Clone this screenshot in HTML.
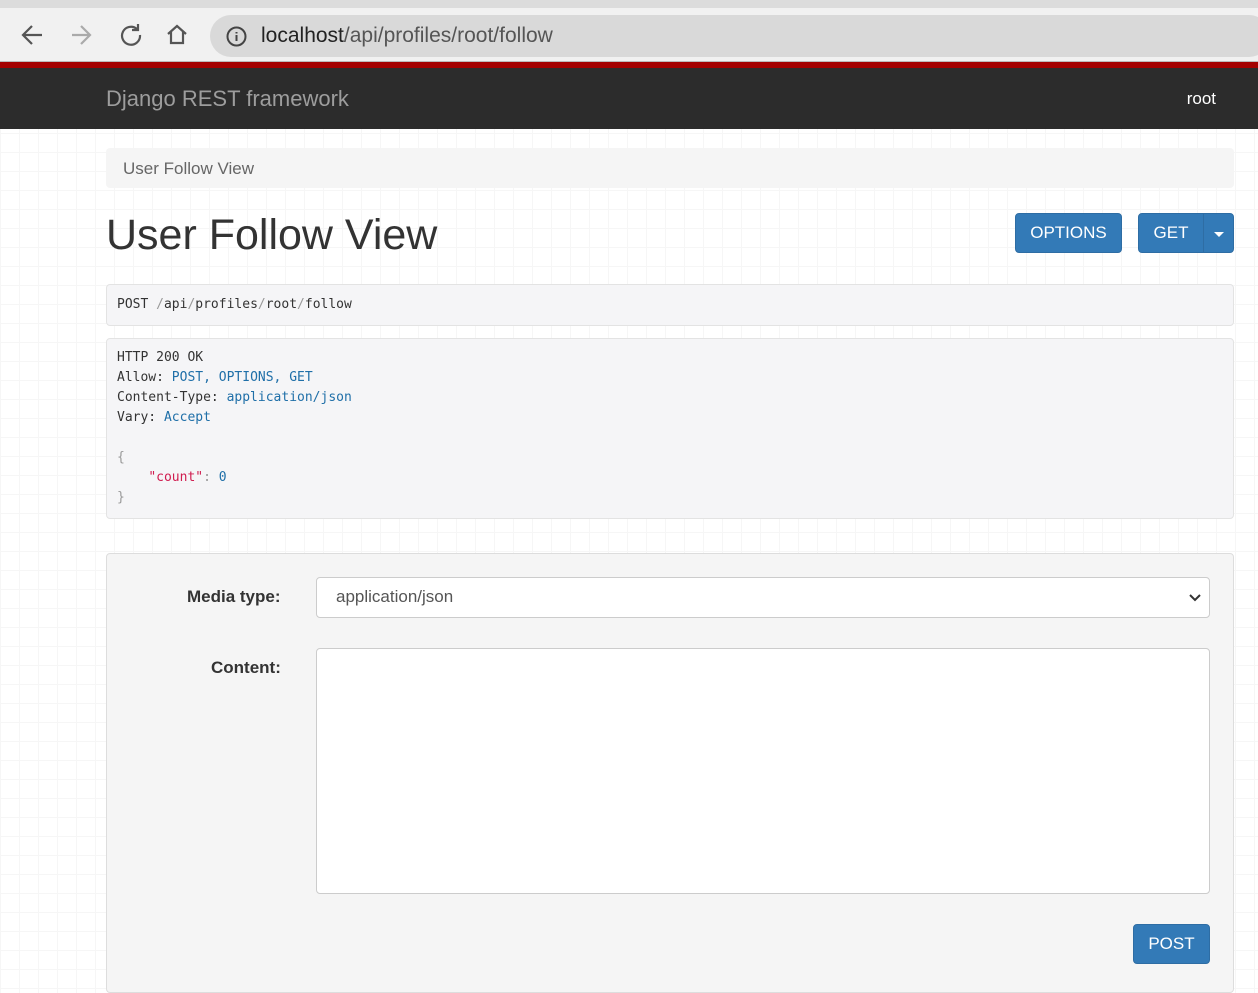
<!DOCTYPE html><html><head><style>
*{box-sizing:border-box}body{margin:0;width:1258px;height:977px;overflow:hidden;font-family:"Liberation Sans",sans-serif;color:#333;background:#fff;
background-image:linear-gradient(#f6f6f6 1px,transparent 1px),linear-gradient(90deg,#f6f6f6 1px,transparent 1px);background-size:19px 19px}
.chrome{position:absolute;left:0;top:0;width:1258px;height:62px;background:#f1f1f1;border-bottom:1px solid #bbb}
.tabs{position:absolute;top:0;left:0;width:1258px;height:8px;background:#dcdcdc}
.url{position:absolute;left:210px;top:15px;width:1060px;height:42px;border-radius:21px;background:#d9d9d9;font-size:21px;line-height:42px;padding-left:51px;color:#222}
.url span{color:#555}
.red{position:absolute;top:62px;left:0;width:1258px;height:6px;background:#a30000}
.nav{position:absolute;top:68px;left:0;width:1258px;height:61px;background:#2c2c2c}
.brand{position:absolute;left:106px;top:18px;font-size:22px;color:#9d9d9d}
.user{position:absolute;right:42px;top:21px;font-size:17px;color:#fff}
.bc{position:absolute;left:106px;top:148px;width:1128px;height:40px;background:#f5f5f5;border-radius:4px;padding:11px 17px;font-size:17px;color:#666}
h1{position:absolute;left:106px;top:211px;margin:0;font-weight:normal;font-size:43px;color:#333}
.btn{position:absolute;background:#337ab7;border:1px solid #2e6da4;color:#fff;font-size:17px;border-radius:4px;height:40px;line-height:38px;text-align:center}
pre{position:absolute;left:106px;width:1128px;margin:0;background:#f5f5f7;border:1px solid #e3e3e3;border-radius:4px;font-family:"DejaVu Sans Mono","Liberation Mono",monospace;font-size:13px;color:#333;padding:10px;line-height:20px}
.b{color:#1f6fa8}.s{color:#d01c4f}.g{color:#999}
.form{position:absolute;left:106px;top:553px;width:1128px;height:440px;background:#f5f5f5;border:1px solid #ddd;border-radius:4px}
label{position:absolute;font-weight:bold;font-size:17px;color:#333}
.in{position:absolute;left:209px;width:894px;background:#fff;border:1px solid #ccc;border-radius:4px}
</style></head><body>
<div class="chrome"><div class="tabs"></div>
<svg style="position:absolute;left:20px;top:22px" width="180" height="26" fill="none" stroke-width="2.2">
<path d="M4 13h18M12 4l-9 9 9 9" stroke="#555"/>
<path d="M52 13h18M61 4l9 9-9 9" stroke="#aaa"/>
<path d="M117 7a9 9 0 1 0 3 6M118 2v6h-6" stroke="#555"/>
<path d="M148 12l9-8 9 8M151 10v11h12V10" stroke="#555"/></svg>
<div class="url"><svg style="position:absolute;left:16px;top:11px" width="21" height="21"><circle cx="10.5" cy="10.5" r="9" fill="none" stroke="#444" stroke-width="2"/><path d="M10.5 9v6M10.5 6v1.5" stroke="#444" stroke-width="2"/></svg>localhost<span>/api/profiles/root/follow</span></div></div>
<div class="red"></div>
<div class="nav"><div class="brand">Django REST framework</div><div class="user">root</div></div>
<div class="bc">User Follow View</div>
<h1>User Follow View</h1>
<div class="btn" style="left:1015px;top:213px;width:107px">OPTIONS</div>
<div class="btn" style="left:1138px;top:213px;width:66px;border-radius:4px 0 0 4px">GET</div>
<div class="btn" style="left:1203px;top:213px;width:31px;border-radius:0 4px 4px 0"><svg width="10" height="6"><path d="M0 0h10L5 5z" fill="#fff"/></svg></div>
<pre style="top:284px;height:42px">POST <span class="g">/</span>api<span class="g">/</span>profiles<span class="g">/</span>root<span class="g">/</span>follow</pre>
<pre style="top:338px;height:181px;padding-top:9px">HTTP 200 OK
Allow: <span class="b">POST, OPTIONS, GET</span>
Content-Type: <span class="b">application/json</span>
Vary: <span class="b">Accept</span>

<span class="g">{</span>
    <span class="s">"count"</span><span class="g">:</span> <span class="b">0</span>
<span class="g">}</span></pre>
<div class="form">
<label style="left:80px;top:33px">Media type:</label>
<div class="in" style="top:23px;height:41px;font-size:17px;padding:9px 19px;color:#555">application/json
<svg style="position:absolute;right:8px;top:16px" width="12" height="8"><path d="M1 1l5 5 5-5" fill="none" stroke="#333" stroke-width="2"/></svg></div>
<label style="left:104px;top:104px">Content:</label>
<div class="in" style="top:94px;height:246px"></div>
<div class="btn" style="left:1026px;top:370px;width:77px">POST</div>
</div>
</body></html>
